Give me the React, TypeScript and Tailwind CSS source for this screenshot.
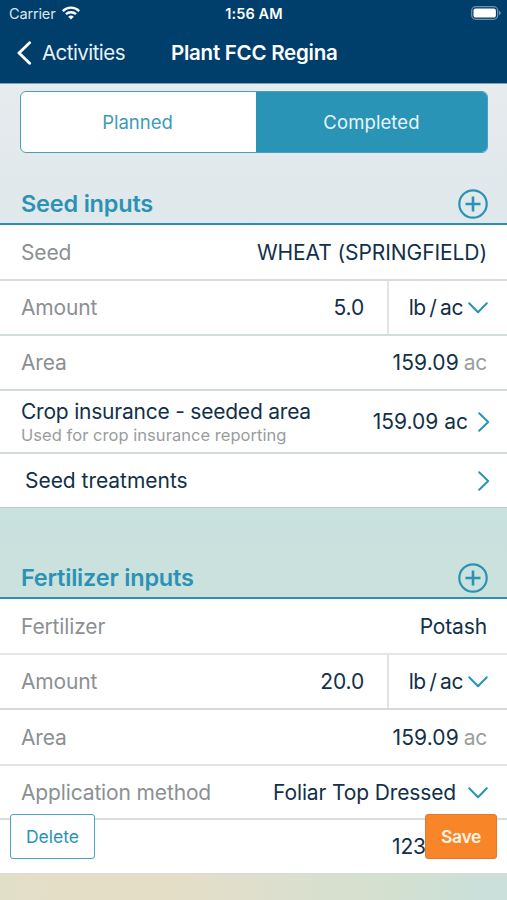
import type { ReactNode } from "react";

function ChevronDown() {
  return (
    <svg className="h-[14px] w-5 shrink-0" viewBox="0 0 20 14" fill="none" stroke="#2a93b5" strokeWidth="2" strokeLinecap="round" strokeLinejoin="round">
      <path d="M1.2 2.2 10 11.2l8.8-9" />
    </svg>
  );
}

function ChevronRight() {
  return (
    <svg className="h-5 w-[12px] shrink-0" viewBox="0 0 12 20" fill="none" stroke="#2a93b5" strokeWidth="2" strokeLinecap="round" strokeLinejoin="round">
      <path d="M1.2 1.2 10.2 10l-9 8.8" />
    </svg>
  );
}

function SectionTitle({ children, className }: { children: ReactNode; className: string }) {
  return (
    <div className={`flex items-end justify-between border-b-2 border-[#2d8fad] pr-[19px] pl-[21px] font-semibold text-[#2a93b5] ${className}`}>
      <h2 className="pb-[4px] text-[23.5px] leading-[30px] font-semibold tracking-[-0.2px]">{children}</h2>
      <svg className="mb-[4px] h-[30px] w-[30px]" viewBox="0 0 30 30" fill="none" stroke="currentColor">
        <circle cx="15" cy="15" r="13.7" strokeWidth="2.2" />
        <path d="M15 7.5v15M7.5 15h15" strokeWidth="2.6" />
      </svg>
    </div>
  );
}

function Row({ label, children, className }: { label?: string; children: ReactNode; className: string }) {
  return (
    <div className={`flex items-center justify-between border-b-2 bg-white pt-px pr-5 pl-[21px] ${className}`}>
      <span className="text-[#8b9094]">{label}</span>
      {children}
    </div>
  );
}

function AmountRow({ value, className }: { value: string; className: string }) {
  return (
    <div className={`flex items-center border-b-2 bg-white pl-[21px] ${className}`}>
      <span className="text-[#8b9094]">Amount</span>
      <span className="ml-auto pr-[23px]">{value}</span>
      <div className="flex h-full w-[120px] items-center justify-end gap-[5px] border-l-2 border-[#e2e4e5] pr-[19px]">
        <span className="tracking-[-0.4px] [word-spacing:-2px]">lb / ac</span>
        <ChevronDown />
      </div>
    </div>
  );
}

function Area() {
  return (
    <span className="tracking-[0.1px]">
      159.09 <span className="-ml-[1px] tracking-[-0.3px] text-[#9a9ea1]">ac</span>
    </span>
  );
}

export default function App() {
  return (
    <div className="relative flex h-[900px] w-[507px] flex-col overflow-hidden bg-[linear-gradient(180deg,#e7eced_9%,#e2e9ed_18%,#dfe8eb_25%,#c9e1df_57%,#cbe1dc_67%,#cbe1dc_90%)] font-['Inter','Liberation_Sans',sans-serif] text-[21px] leading-[26px] tracking-[-0.14px] text-[#123049]">
      <header className="flex h-[84px] shrink-0 flex-col border-b border-[#7da3b9] bg-[#003e6b] text-white">
        <div className="grid h-[28px] grid-cols-3 items-center pr-[6px] pl-[9px] text-[14.5px] tracking-[-0.15px]">
          <div className="flex items-center gap-[7px] text-[#dce6ee]">
            <span>Carrier</span>
            <svg className="-mt-[2px] h-[14px] w-[18px]" viewBox="0 0 18 14" fill="none" stroke="white" strokeWidth="2.4">
              <path d="M.8 5.1C5.4.5 12.6.5 17.2 5.1M3.9 8.2c2.9-2.7 7.3-2.7 10.2 0" />
              <path d="m9 13.5-2.8-2.8c1.5-1.5 4.1-1.5 5.6 0Z" fill="white" stroke="none" />
            </svg>
          </div>
          <span className="-ml-[2px] text-center font-semibold whitespace-nowrap tracking-[0.1px]">1:56 AM</span>
          <svg className="-mt-[2px] h-[14px] w-[30px] justify-self-end" viewBox="0 0 30 14">
            <rect x=".7" y=".7" width="26" height="12.6" rx="4" fill="none" stroke="#6f91ab" strokeWidth="1.3" />
            <rect x="2.5" y="2.4" width="22.4" height="9.2" rx="2.2" fill="white" />
            <path d="M28 4.8c2.3.7 2.3 3.7 0 4.4Z" fill="#6f91ab" />
          </svg>
        </div>
        <div className="flex h-[49px] items-center pl-[17px]">
          <svg className="h-6 w-[15px]" viewBox="0 0 15 24" fill="none" stroke="white" strokeWidth="2.9" strokeLinecap="round" strokeLinejoin="round">
            <path d="M12.6 1.8 2 12l10.6 10.2" />
          </svg>
          <span className="ml-[10px] w-[129px] text-[20.5px] tracking-[-0.55px] text-[#e8f1f7]">Activities</span>
          <h1 className="text-[20.5px] font-semibold tracking-[-0.25px] whitespace-nowrap">Plant FCC Regina</h1>
        </div>
      </header>

      <div className="mx-5 mt-[7px] grid h-[62px] w-[468px] shrink-0 grid-cols-[235px_1fr] overflow-hidden rounded-[6px] border border-[#4a9fba] bg-white text-center text-[18.5px] leading-[60px] tracking-[0px]">
        <span className="pr-[2px] text-[#3c9bb9]">Planned</span>
        <span className="bg-[#2a94b6] tracking-[0.1px] text-[#e7f5f9]">Completed</span>
      </div>

      <SectionTitle className="h-[72px] shrink-0">Seed inputs</SectionTitle>
      <Row label="Seed" className="h-[56px] shrink-0 border-[#dadddf]">
        <span className="tracking-[-0.08px]">WHEAT (SPRINGFIELD)</span>
      </Row>
      <AmountRow value="5.0" className="h-[55px] shrink-0 border-[#d2dedd]" />
      <Row label="Area" className="h-[55px] shrink-0 border-[#d2dbdb]">
        <Area />
      </Row>
      <div className="flex h-[63px] shrink-0 items-center border-b-2 border-[#d2dada] bg-white pr-[17px] pl-[21px]">
        <div className="flex flex-col pt-px">
          <span className="leading-[25px] tracking-[-0.22px]">Crop insurance - seeded area</span>
          <span className="text-[16.5px] leading-[22px] tracking-[0.04px] text-[#999da0]">Used for crop insurance reporting</span>
        </div>
        <span className="mr-[10px] ml-auto tracking-[0px]">159.09 ac</span>
        <ChevronRight />
      </div>
      <div className="flex h-[54px] shrink-0 items-center justify-between border-b border-[#b9cccd] bg-white pr-[17px] pl-[25px]">
        <span className="tracking-[-0.03px]">Seed treatments</span>
        <ChevronRight />
      </div>

      <SectionTitle className="h-[91px] shrink-0">Fertilizer inputs</SectionTitle>
      <Row label="Fertilizer" className="h-[56px] shrink-0 border-[#e4e6e7]">
        <span>Potash</span>
      </Row>
      <AmountRow value="20.0" className="h-[55px] shrink-0 border-[#d6d8d9]" />
      <Row label="Area" className="h-[56px] shrink-0 border-[#e2e4e5]">
        <Area />
      </Row>
      <Row label="Application method" className="h-[54px] shrink-0 border-[#dadcdd]">
        <div className="-mr-px flex items-center gap-3">
          <span>Foliar Top Dressed</span>
          <ChevronDown />
        </div>
      </Row>
      <div className="flex h-[54px] shrink-0 items-center border-b border-[#d9dbd8] bg-white pl-[392px]">
        <span>123.0</span>
      </div>
      <div className="flex-1 bg-[linear-gradient(90deg,#e1dfc8_0%,#e5dec7_12%,#e4dec7_35%,#dcdfcd_55%,#d3e0d0_78%,#cbe0da_95%)]" />

      <button className="absolute top-[814px] left-[10px] h-[45px] w-[85px] rounded-[3px] border-[1.5px] border-[#4aa3c0] bg-white text-[17.5px] tracking-[0px] text-[#2a93b5]">Delete</button>
      <button className="absolute top-[814px] left-[425px] h-[45px] w-[72px] rounded-[3px] border border-[#e47a25] bg-[#f98529] text-[17.5px] font-semibold tracking-[-0.3px] text-[#fff3e5]">Save</button>
    </div>
  );
}
